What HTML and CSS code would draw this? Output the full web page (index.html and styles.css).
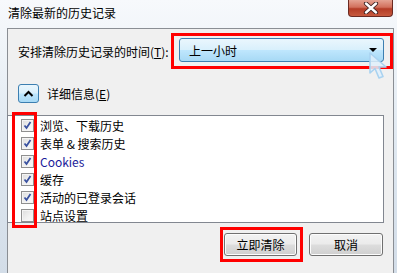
FILE: index.html
```html
<!DOCTYPE html>
<html lang="zh-CN">
<head>
    <meta charset="UTF-8">
    <title>清除最新的历史记录</title>
    <link rel="stylesheet" href="styles.css">
</head>
<body>
    <div class="window">
        <div class="titlebar">
            <span class="title">清除最新的历史记录</span>
            <div class="close">
                <svg width="20" height="12" viewBox="0 0 20 12">
                    <path d="M5 1.5 L15 10.5 M15 1.5 L5 10.5" stroke="#3a2020" stroke-width="4.2" stroke-linecap="round"/>
                    <path d="M5 1.5 L15 10.5 M15 1.5 L5 10.5" stroke="#fff" stroke-width="2.4" stroke-linecap="round"/>
                </svg>
            </div>
        </div>
        <div class="client">
            <div class="range-row">
                <span class="label">安排清除历史记录的时间(<u>T</u>):</span>
                <div class="mark mark-range">
                    <div class="select">
                        <span>上一小时</span>
                        <span class="arrow"></span>
                    </div>
                </div>
            </div>
            <div class="details-row">
                <button class="twisty">
                    <svg width="11" height="7" viewBox="0 0 11 7">
                        <path d="M1.5 6 L5.5 2 L9.5 6" fill="none" stroke="#000" stroke-width="2"/>
                    </svg>
                </button>
                <span class="label">详细信息(<u>E</u>)</span>
            </div>
            <div class="list">
                <div class="item"><span class="box checked"></span>浏览、下载历史</div>
                <div class="item"><span class="box checked"></span>表单 &amp; 搜索历史</div>
                <div class="item cookies"><span class="box checked"></span>Cookies</div>
                <div class="item"><span class="box checked"></span>缓存</div>
                <div class="item"><span class="box checked"></span>活动的已登录会话</div>
                <div class="item"><span class="box"></span>站点设置</div>
                <div class="mark mark-checks"></div>
            </div>
            <div class="actions">
                <div class="mark mark-button">
                    <button class="btn">立即清除</button>
                </div>
                <button class="btn">取消</button>
            </div>
        </div>
        <svg class="cursor" width="24" height="30" viewBox="0 0 24 30">
            <path d="M2 2 L2 22 L7 17.5 L11 27 L15 25.5 L11 16 L18 16 Z" fill="rgba(225,240,252,0.85)" stroke="#a9d2f0" stroke-width="1.6" stroke-linejoin="round"/>
        </svg>
    </div>
</body>
</html>
```

FILE: styles.css
```css
body {
    margin: 0;
    font-family: "Noto Sans CJK SC", "Noto Sans", sans-serif;
    font-size: 12px;
    color: #000;
    background: #dfe7ef;
}

.window {
    position: relative;
    width: 397px;
    height: 273px;
    overflow: hidden;
    background: linear-gradient(180deg, #f7f9fc 0%, #eef3f8 20%, #dde6ef 60%, #d3dde8 100%);
}

.titlebar {
    display: flex;
    align-items: flex-start;
    height: 28px;
}

.title {
    padding: 4px 0 0 8px;
    line-height: 17px;
}

.close {
    margin-left: auto;
    margin-right: 4px;
    width: 45px;
    height: 17px;
    display: flex;
    align-items: center;
    justify-content: center;
    box-sizing: border-box;
    border: 1px solid #6b2a22;
    border-top: none;
    border-radius: 0 0 4px 4px;
    background: linear-gradient(180deg, #e5a393 0%, #d2705c 45%, #b43c26 55%, #c75a3f 100%);
}

/* client area */
.client {
    margin: 0 3px 0 7px;
    height: 260px;
    border: 1px solid #8a8e94;
    border-bottom: none;
    background: #f0f0f0;
}

.range-row {
    display: flex;
    align-items: center;
    margin-top: 4px;
    height: 36px;
}

.range-row .label {
    padding-left: 10px;
}

.mark {
    border: 3px solid #f00;
}

.mark-range {
    margin-left: auto;
    padding: 2px 6px 4px 5px;
}

.select {
    width: 205px;
    height: 24px;
    box-sizing: border-box;
    display: flex;
    align-items: center;
    padding: 0 6px 0 9px;
    border: 1px solid #3c7fb1;
    border-radius: 3px;
    background: linear-gradient(180deg, #eaf6fd 0%, #d9f0fc 48%, #bee6fd 52%, #a7d9f5 100%);
}

.arrow {
    margin-left: auto;
    width: 0;
    height: 0;
    border-left: 4px solid transparent;
    border-right: 4px solid transparent;
    border-top: 4px solid #000;
}

.details-row {
    display: flex;
    align-items: center;
    margin-top: 15px;
    padding-left: 10px;
}

.twisty {
    width: 21px;
    height: 19px;
    padding: 0;
    margin-right: 8px;
    display: flex;
    align-items: center;
    justify-content: center;
    border: 1px solid #3c7fb1;
    border-radius: 3px;
    background: linear-gradient(180deg, #eaf6fd 0%, #d9f0fc 48%, #bee6fd 52%, #a7d9f5 100%);
}

.list {
    position: relative;
    margin: 12px 0 0 -1px;
    width: 377px;
    height: 108px;
    box-sizing: border-box;
    border: 1px solid #828790;
    background: #fff;
}

.item {
    display: flex;
    align-items: center;
    height: 18px;
    padding-left: 13px;
}

.cookies {
    color: #1a1a9a;
}

.box {
    width: 13px;
    height: 13px;
    box-sizing: border-box;
    margin-right: 6px;
    border: 1px solid #8f8f8f;
    background: linear-gradient(135deg, #dcdcdc 0%, #f2f2f2 60%, #fafafa 100%);
    box-shadow: inset 0 0 0 1px #f4f4f4;
}

.box.checked {
    background: url("data:image/svg+xml,%3Csvg xmlns='http://www.w3.org/2000/svg' width='11' height='11'%3E%3Cpath d='M2.5 5.5 L4.5 8 L8.5 2' fill='none' stroke='%233a52a0' stroke-width='1.8'/%3E%3C/svg%3E") center no-repeat,
        linear-gradient(135deg, #dcdcdc 0%, #f2f2f2 60%, #fafafa 100%);
}

/* annotation box over the checkbox column */
.mark-checks {
    position: absolute;
    left: 4px;
    top: -4px;
    width: 19px;
    height: 110px;
}

.actions {
    display: flex;
    align-items: center;
    justify-content: flex-end;
    margin-top: 4px;
    padding-right: 10px;
}

.mark-button {
    padding: 3px 3px 3px 1px;
    margin-right: 6px;
}

.btn {
    width: 74px;
    height: 23px;
    padding: 0;
    font-family: inherit;
    font-size: 12px;
    color: #000;
    border: 1px solid #707070;
    border-radius: 3px;
    background: linear-gradient(180deg, #f2f2f2 0%, #ebebeb 48%, #dddddd 52%, #cfcfcf 100%);
    box-shadow: inset 0 0 0 1px #fcfcfc;
}

.mark-button .btn {
    width: 73px;
}

.cursor {
    position: absolute;
    left: 368px;
    top: 51px;
}
```
